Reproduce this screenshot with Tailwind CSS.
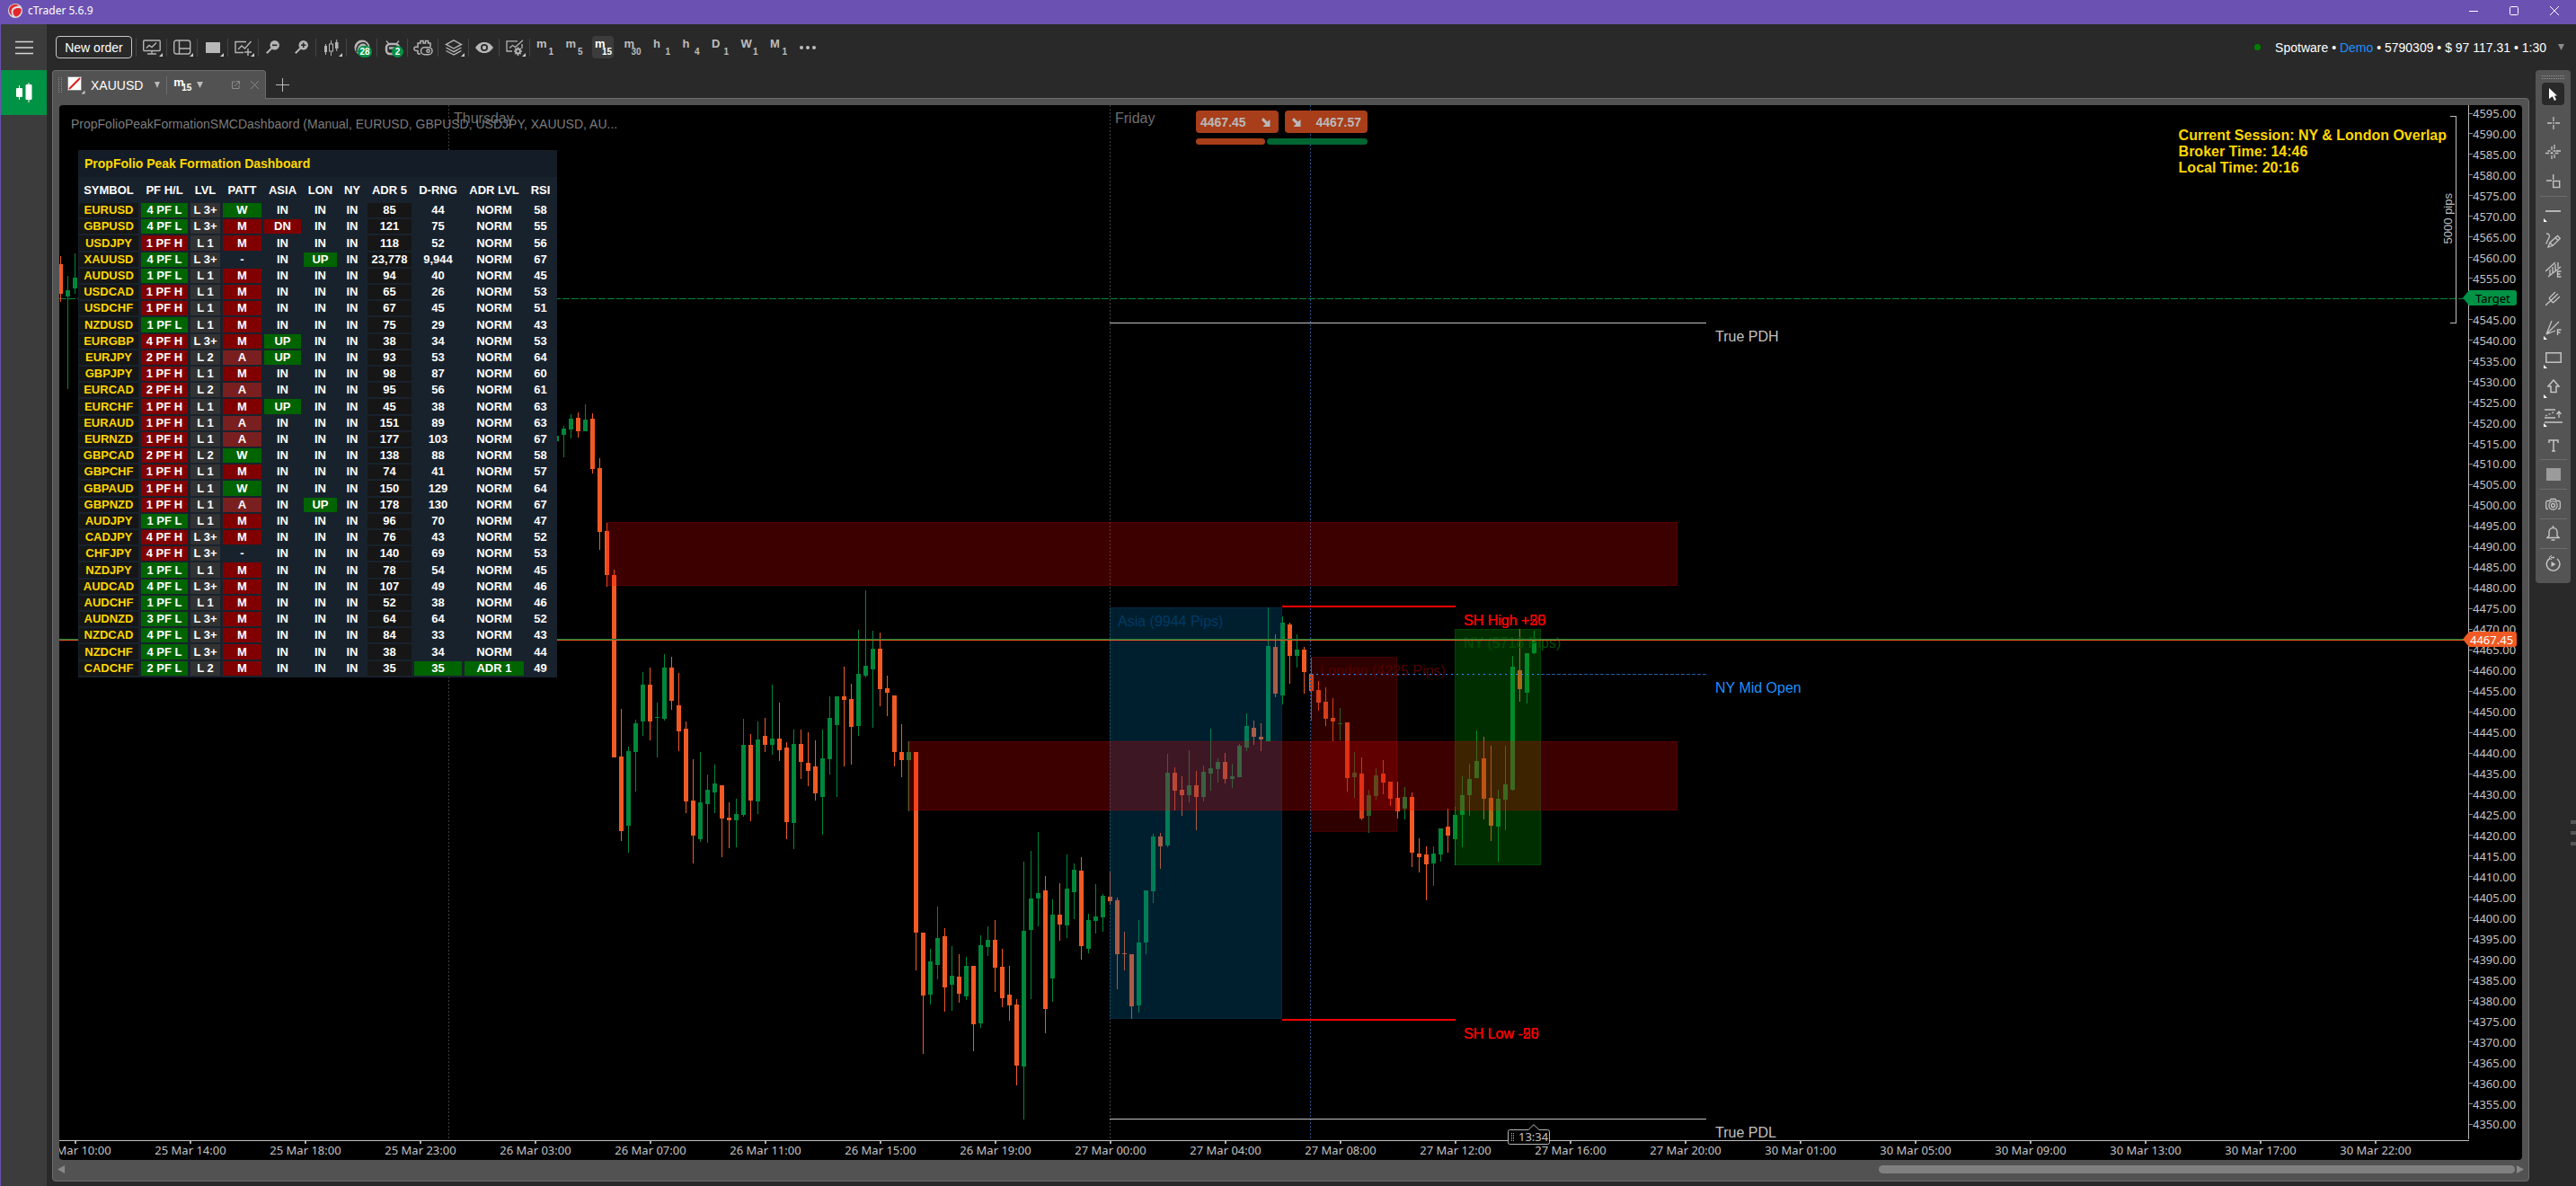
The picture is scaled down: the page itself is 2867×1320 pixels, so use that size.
<!DOCTYPE html>
<html lang="en">
<head>
  <meta charset="UTF-8" />
  <meta name="viewport" content="width=device-width, initial-scale=1.0"/>
  <title>cTrader 5.6.9</title>
  <script src="https://cdn.jsdelivr.net/npm/@tailwindcss/browser@4"></script>
</head>

<body class="flex flex-col h-screen overflow-hidden bg-[#292929] text-[#c4c4c4] text-sm font-['Liberation_Sans',Arial,sans-serif]">

<!-- Title bar -->
<header class="flex items-center h-[27px] shrink-0 bg-[#6b51b1] text-white">
  <svg class="w-4 h-4 ml-[9px] -mt-1" viewBox="0 0 16 16">
    <circle cx="8" cy="8" r="8" fill="#d9dde0"/>
    <path d="M1 7A7 7 0 0 1 12.500 2.500C9 2.500 4 4 3.500 8.500C3.300 10 4 12 5 13.500A7 7 0 0 1 1 7Z" fill="#e3262c"/>
    <path d="M5.500 9.500C5.500 6.500 8 5 11 5C13 5 14.500 5.500 14.800 6.500C15 10 12.500 14 8.500 14.500C6.500 13.500 5.500 11.500 5.500 9.500Z" fill="#e3262c"/>
  </svg>
  <h1 class="ml-1.5 -mt-1 text-xs leading-4 font-['Noto_Sans',sans-serif]">cTrader 5.6.9</h1>
  <div class="flex ml-auto mr-0.5 -mt-1 h-full items-center">
    <button class="w-[45px] flex justify-center" aria-label="Minimize"><svg class="w-3 h-3" viewBox="0 0 12 12" stroke="#fff" fill="none"><path d="M1 6.500h10"/></svg></button>
    <button class="w-[45px] flex justify-center" aria-label="Maximize"><svg class="w-3 h-3" viewBox="0 0 12 12" stroke="#fff" fill="none"><rect x="1.500" y="1.500" width="9" height="9" rx="1"/></svg></button>
    <button class="w-[45px] flex justify-center" aria-label="Close"><svg class="w-3 h-3" viewBox="0 0 12 12" stroke="#fff" fill="none"><path d="M1 1l10 10M11 1L1 11"/></svg></button>
  </div>
</header>

<div class="relative flex flex-1 min-h-0 border-l border-[#6b51b1]">
  <!-- Sidebar -->
  <nav class="w-[51px] shrink-0 bg-[#3c3c3c]">
    <button class="flex items-center justify-center w-full h-[51px]" aria-label="Menu">
      <svg class="w-5 h-4" viewBox="0 0 20 16" stroke="#d6d6d6" stroke-width="1.500"><path d="M0 1.500h20M0 8h20M0 14.500h20"/></svg>
    </button>
    <button class="flex items-center justify-center w-full h-[50px] bg-[#009245]" aria-label="Trade">
      <svg class="w-[18px] h-[22px]" viewBox="0 0 18 22" fill="#fff"><rect x="0" y="6" width="7" height="10" rx="1"/><rect x="3" y="3" width="1" height="16"/><rect x="10.500" y="2" width="7" height="17" rx="1"/><rect x="13.500" y="0" width="1" height="22"/></svg>
    </button>
  </nav>

  <main class="flex flex-col flex-1 min-w-0">
    <!-- Toolbar -->
    <div class="flex items-center h-[51px] shrink-0 pl-[10px]">
      <button class="w-[85px] h-[25px] mr-1 border border-[#c8c8c8] rounded-[4px] text-white text-sm">New order</button>
      <div class="flex items-center h-5 text-[#b4b4b4]">
        <button class="relative flex items-center justify-center w-[34px] h-5 border-l border-[#454545]" aria-label="Templates">
          <svg class="w-5 h-[17px]" viewBox="0 0 20 17" fill="none" stroke="currentColor" stroke-width="1.400"><rect x=".7" y="1" width="18.500" height="11.500" rx="1"/><path d="M10 13v3M5 16h10M4 9.500l3-3 3 2 5-5"/></svg>
          <svg class="absolute right-1 bottom-0 w-1 h-1" viewBox="0 0 4 4" fill="#ccc"><path d="M4 0v4H0z"/></svg>
        </button>
        <button class="relative flex items-center justify-center w-[34px] h-5 border-l border-[#454545]" aria-label="Layout">
          <svg class="w-5 h-[17px]" viewBox="0 0 20 17" fill="none" stroke="currentColor" stroke-width="1.400"><rect x=".7" y="1" width="18" height="15" rx="2.500"/><path d="M6.500 1v15M6.500 10H19"/></svg>
          <svg class="absolute right-1 bottom-0 w-1 h-1" viewBox="0 0 4 4" fill="#ccc"><path d="M4 0v4H0z"/></svg>
        </button>
        <button class="relative flex items-center justify-center w-[34px] h-5 border-l border-[#454545]" aria-label="Single chart">
          <svg class="w-4 h-3" viewBox="0 0 16 12" fill="#b8b8b8"><rect width="16" height="12"/></svg>
          <svg class="absolute right-1 bottom-0 w-1 h-1" viewBox="0 0 4 4" fill="#ccc"><path d="M4 0v4H0z"/></svg>
        </button>
        <button class="relative flex items-center justify-center w-[34px] h-5 border-l border-[#454545]" aria-label="New chart">
          <svg class="w-5 h-[18px]" viewBox="0 0 20 18" fill="none" stroke="currentColor" stroke-width="1.400"><path d="M13 2.500H1v12h9M4 11l4-4 3.500 3L18.500 2M15 10v8M11 14h8"/></svg>
          <svg class="absolute right-1 bottom-0 w-1 h-1" viewBox="0 0 4 4" fill="#ccc"><path d="M4 0v4H0z"/></svg>
        </button>
        <button class="flex items-center justify-center w-8 h-5 border-l border-[#454545]" aria-label="Zoom out">
          <svg class="w-[15px] h-[15px]" viewBox="0 0 15 15"><path d="M.8 14.200l6-6" stroke="#b4b4b4" stroke-width="2"/><circle cx="9.700" cy="5.300" r="5.200" fill="#b4b4b4"/><path d="M7 5.300h5.400" stroke="#292929" stroke-width="1.600"/></svg>
        </button>
        <button class="flex items-center justify-center w-8 h-5" aria-label="Zoom in">
          <svg class="w-[15px] h-[15px]" viewBox="0 0 15 15"><path d="M.8 14.200l6-6" stroke="#b4b4b4" stroke-width="2"/><circle cx="9.700" cy="5.300" r="5.200" fill="#b4b4b4"/><path d="M7 5.300h5.400M9.700 2.600v5.400" stroke="#292929" stroke-width="1.600"/></svg>
        </button>
        <button class="relative flex items-center justify-center w-[34px] h-5 border-l border-[#454545]" aria-label="Chart type">
          <svg class="w-4 h-[18px]" viewBox="0 0 16 18" fill="#b4b4b4"><rect x="0" y="7" width="3" height="7"/><rect x="1" y="5" width="1" height="12"/><rect x="5.500" y="5" width="4" height="8" fill="none" stroke="#b4b4b4"/><rect x="7" y="1" width="1" height="4"/><rect x="7" y="13" width="1" height="5"/><rect x="12" y="3" width="3.500" height="7"/><rect x="13.200" y="0" width="1" height="13"/></svg>
          <svg class="absolute right-1 bottom-0 w-1 h-1" viewBox="0 0 4 4" fill="#ccc"><path d="M4 0v4H0z"/></svg>
        </button>
        <button class="relative flex items-center justify-center w-[34px] h-5 border-l border-[#454545]" aria-label="Indicators">
          <svg class="w-[18px] h-[18px]" viewBox="0 0 18 18"><circle cx="9" cy="9" r="8.500" fill="#b4b4b4"/><path d="M3 14C2 9 5 4 10 3.500c3 0 4 2 5 4M6 15c0-5 2-7 6-7" stroke="#292929" stroke-width="1.500" fill="none"/></svg>
          <span class="absolute left-3 top-2 w-4 h-[13px] rounded-full bg-[#009245] text-white text-[10px] leading-[13px] font-bold">28</span>
        </button>
        <button class="relative flex items-center justify-center w-[34px] h-5 border-l border-[#454545]" aria-label="cBots">
          <svg class="w-[18px] h-[18px]" viewBox="0 0 18 18" fill="none" stroke="#b4b4b4"><path d="M2 1.500l3 3.500M16 1.500L13 5" stroke-width="1.200"/><rect x="2" y="5" width="14" height="11" rx="4" stroke-width="2.500"/><path d="M5 9.500h8" stroke-width="2.500"/></svg>
          <span class="absolute left-4 top-2 w-[13px] h-[13px] rounded-full bg-[#009245] text-white text-[10px] leading-[13px] font-bold">2</span>
        </button>
        <button class="flex items-center justify-center w-[34px] h-5 border-l border-[#454545]" aria-label="Plugins">
          <svg class="w-[22px] h-[18px]" viewBox="0 0 22 18" fill="none" stroke="currentColor" stroke-width="1.500"><path d="M5 16v-3.500C1 13 .8 11 1 9.500s2-1.500 4-1V4h3V1.500h3V4h2.500V1.500h3V4H19v4M5 16h3"/><rect x="8.500" y="8.700" width="12.500" height="8" rx="4"/><circle cx="16.500" cy="12.700" r="1.600"/></svg>
        </button>
        <button class="relative flex items-center justify-center w-[34px] h-5 border-l border-[#454545]" aria-label="Layers">
          <svg class="w-5 h-[18px]" viewBox="0 0 20 18" fill="none" stroke="currentColor" stroke-width="1.400"><path d="M10 .8l8.500 4.600L10 10 1.500 5.400zM1.500 9l8.500 4.600L18.500 9M1.500 12.500L10 17l8.500-4.500"/></svg>
          <svg class="absolute right-1 bottom-0 w-1 h-1" viewBox="0 0 4 4" fill="#ccc"><path d="M4 0v4H0z"/></svg>
        </button>
        <button class="flex items-center justify-center w-[34px] h-5 border-l border-[#454545]" aria-label="Visibility">
          <svg class="w-5 h-3" viewBox="0 0 20 12"><path d="M0 6C3 1.500 6.500 0 10 0s7 1.500 10 6c-3 4.500-6.500 6-10 6S3 10.500 0 6z" fill="#b8b8b8"/><circle cx="10" cy="6" r="4" fill="#292929"/><circle cx="10" cy="6" r="2.200" fill="#b8b8b8"/></svg>
        </button>
        <button class="relative flex items-center justify-center w-[34px] h-5 border-l border-[#454545]" aria-label="Chart settings">
          <svg class="w-5 h-[18px]" viewBox="0 0 20 18" fill="none" stroke="currentColor" stroke-width="1.300"><path d="M13 1.800H1V13h6M18 5v5M4 9.500l3.500-3 3 2L19 .8"/><circle cx="13.500" cy="13" r="2.400" stroke-width="2"/><path d="M13.500 8.500v1.500M13.500 16v2M9 13h1.500M16.500 13H18M10.300 9.800l1 1M15.700 15.200l1 1M10.300 16.200l1-1M15.700 10.800l1-1" stroke-width="1.600"/></svg>
          <svg class="absolute right-1 bottom-0 w-1 h-1" viewBox="0 0 4 4" fill="#ccc"><path d="M4 0v4H0z"/></svg>
        </button>
        <span class="w-px h-5 bg-[#454545]"></span>
      </div>

      <div id="timeframes" class="flex justify-between w-[284px] ml-1"></div>
      <button class="flex gap-[3px] ml-3" aria-label="More">
        <i class="w-1 h-1 rounded-full bg-[#bdbdbd]"></i><i class="w-1 h-1 rounded-full bg-[#bdbdbd]"></i><i class="w-1 h-1 rounded-full bg-[#bdbdbd]"></i>
      </button>

      <div class="flex items-center ml-auto pr-[13px]">
        <i class="w-[7px] h-[7px] mr-4 rounded-full bg-[#008000]"></i>
        <p class="text-sm text-white">Spotware • <a href="#" class="text-[#1e90ff]">Demo</a> • 5790309 • $ 97 117.31 • 1:30</p>
        <svg class="w-[7px] h-[7px] ml-[13px]" viewBox="0 0 7 7" fill="#8a8a8a"><path d="M0 0h7L3.500 7z"/></svg>
      </div>
    </div>

    <div class="flex flex-1 min-h-0 pl-1.5 pr-1.5 pb-[5px]">
      <div class="flex flex-col flex-1 min-w-0">
        <!-- Tabs -->
        <div class="relative z-10 flex h-8 -mb-px shrink-0">
          <div class="flex items-center w-[238px] pl-1.5 bg-[#525252] border-t border-l border-r border-[#6c6c6c] rounded-t-[4px]">
            <svg class="w-1 h-[18px]" viewBox="0 0 4 18" stroke="#8a8a8a" stroke-dasharray="1 1"><path d="M.5 0v18M3.500 0v18"/></svg>
            <svg class="w-5 h-5 ml-1.5" viewBox="0 0 20 20"><rect x="0.500" y="0.500" width="15" height="15" fill="#fff" stroke="#888"/><path d="M2 14L14 2" stroke="#e3171b" stroke-width="2"/><path d="M19.500 15.500v4h-4z" fill="#ccc"/></svg>
            <button class="ml-1.5 text-sm text-white">XAUUSD</button>
            <svg class="w-1.5 h-[7px] ml-[13px]" viewBox="0 0 6 7" fill="#bbb"><path d="M0 0h6L3 7z"/></svg>
            <span class="w-px h-5 mx-[7px] bg-[#6c6c6c]"></span>
            <button class="relative w-5 h-5 text-white font-bold" aria-label="Timeframe"><span class="absolute left-0 top-0 text-[13px] leading-[13px]">m</span><sub class="absolute right-0 bottom-0.5 text-[10px] leading-[10px]">15</sub></button>
            <svg class="w-[7px] h-[7px] ml-1.5" viewBox="0 0 7 7" fill="#bbb"><path d="M0 0h7L3.500 7z"/></svg>
            <button class="ml-8" aria-label="Detach"><svg class="w-[9px] h-[9px]" viewBox="0 0 9 9" fill="none" stroke="#8c8c8c"><path d="M4 1H.5v7.500H8V5M5 .5h3.500V4M8.500.5L3 6"/></svg></button>
            <button class="ml-3" aria-label="Close tab"><svg class="w-[9px] h-[9px]" viewBox="0 0 9 9" stroke="#8c8c8c"><path d="M0 0l9 9M9 0L0 9"/></svg></button>
          </div>
          <button class="ml-[11px] self-center" aria-label="New tab"><svg class="w-[15px] h-[15px]" viewBox="0 0 15 15" stroke="#bbb"><path d="M7.500 0v15M0 7.500h15"/></svg></button>
        </div>

        <!-- Chart frame -->
        <section class="flex flex-col flex-1 min-h-0 px-[7px] pt-[7px] bg-[#525252] border border-[#6c6c6c] rounded-b-[4px] rounded-tr-[4px]">
          <div class="grid flex-1 min-h-0 grid-cols-[1fr_60px] grid-rows-[1fr_23px] bg-black rounded-[4px] overflow-hidden">
            <div class="relative overflow-hidden">
              <svg id="chart" class="absolute inset-0 w-full h-full" shape-rendering="crispEdges" font-size="16">
                <g transform="translate(-66 -117)">
                  <g stroke="#404040" stroke-dasharray="2 2">
                    <path d="M499.500 117V1268M1235.500 117V1268"/>
                  </g>
                  <path d="M66 332.500H2748" stroke="#00873c" stroke-dasharray="8 2"/>
                  <g fill="#6e6e6e">
                    <text x="505" y="137">Thursday</text>
                    <text x="1241" y="137">Friday</text>
                  </g>
                  <g id="candles"></g>
                  <path d="M1458.500 117V1268" stroke="#255390" stroke-dasharray="2 2"/>
                  <!-- sessions -->
                  <rect x="1235" y="676" width="192" height="458" fill="#006799" fill-opacity=".3"/>
                  <rect x="1235.500" y="676.500" width="191" height="457" fill="none" stroke="#006799" stroke-opacity=".15"/>
                  <rect x="1459" y="731" width="96" height="195" fill="#990000" fill-opacity=".3"/>
                  <rect x="1459.500" y="731.500" width="95" height="194" fill="none" stroke="#990000" stroke-opacity=".2"/>
                  <rect x="1619" y="700" width="96" height="263" fill="#009900" fill-opacity=".3"/>
                  <rect x="1619.500" y="700.500" width="95" height="262" fill="none" stroke="#009900" stroke-opacity=".2"/>
                  <!-- supply zones -->
                  <g fill="#ff0000" fill-opacity=".24">
                    <rect x="675" y="581" width="1192" height="71"/>
                    <rect x="1010" y="825" width="857" height="77"/>
                  </g>
                  <g fill="none" stroke="#ff0000" stroke-opacity=".13">
                    <rect x="675.500" y="581.500" width="1191" height="70"/>
                    <rect x="1010.500" y="825.500" width="856" height="76"/>
                  </g>
                  <text x="1244" y="697" fill="#003a66">Asia (9944 Pips)</text>
                  <text x="1469" y="752" fill="#540000">London (4225 Pips)</text>
                  <text x="1629" y="721" fill="#005200">NY (5718 Pips)</text>
                  <path d="M1459 750.500H1715" stroke="#1e90ff" stroke-dasharray="2 4"/>
                  <path d="M1715 750.500H1900" stroke="#1e5ca8" stroke-dasharray="4 2"/>
                  <path d="M1235 359.500H1899M1235 1245.500H1899" stroke="#c0c0c0"/>
                  <path d="M1427 675H1620M1427 1135H1620" stroke="#ff0000" stroke-width="2"/>
                  <path d="M66 711.500H2748" stroke="#00873c"/>
                  <path d="M66 712.500H2748" stroke="#f15a24"/>
                  <g fill="#ff0000">
                    <text x="1629" y="696">SH High +25</text><text x="1629" y="696">SH High +50</text>
                    <text x="1629" y="1156">SH Low -25</text><text x="1629" y="1156">SH Low -50</text>
                  </g>
                  <text x="1909" y="771" fill="#1e90ff">NY Mid Open</text>
                  <g fill="#c0c0c0">
                    <text x="1909" y="380">True PDH</text>
                    <text x="1909" y="1266">True PDL</text>
                  </g>
                </g>
              </svg>

              <p class="absolute left-[13px] top-[13px] text-sm leading-4 text-[#7c7c7c] whitespace-nowrap">PropFolioPeakFormationSMCDashbaord (Manual, EURUSD, GBPUSD, USDJPY, XAUUSD, AU...</p>

              <!-- Dashboard -->
              <div class="absolute left-[21px] top-[50px] w-[533px] bg-[#18222d] text-[13px] font-bold text-white">
                <h2 class="h-[30px] pl-[7px] leading-[30px] text-sm bg-[#141d27] text-[#ffd700]">PropFolio Peak Formation Dashboard</h2>
                <table class="table-fixed w-[532px] h-[557px] ml-px border-separate border-spacing-0 text-center leading-4">
                  <colgroup>
                    <col class="w-[69px]"><col class="w-[55px]"><col class="w-[36px]"><col class="w-[46px]"><col class="w-[44px]"><col class="w-[40px]"><col class="w-[31px]"><col class="w-[52px]"><col class="w-[56px]"><col class="w-[69px]"><col class="w-[34px]">
                  </colgroup>
                  <thead>
                    <tr class="h-[29px] whitespace-nowrap">
                      <th class="p-0 pr-[3px]">SYMBOL</th><th class="p-0 pr-[3px]">PF H/L</th><th class="p-0 pr-[3px]">LVL</th><th class="p-0 pr-[3px]">PATT</th><th class="p-0 pr-[3px]">ASIA</th><th class="p-0 pr-[3px]">LON</th><th class="p-0 pr-[3px]">NY</th><th class="p-0 pr-[3px]">ADR 5</th><th class="p-0 pr-[3px]">D-RNG</th><th class="p-0 pr-[3px]">ADR LVL</th><th class="p-0 pr-[3px]">RSI</th>
                    </tr>
                  </thead>
                  <tbody id="pairs"></tbody>
                </table>
              </div>

              <!-- Quick trade -->
              <div class="absolute left-[1265px] top-1.5 w-[191px] text-sm font-bold text-[#b9b9b9]">
                <div class="flex justify-between">
                  <button class="flex items-center justify-between w-[92px] h-[25px] pl-[5px] pr-[9px] rounded-[4px] bg-[#a83e1a]">4467.45
                    <svg class="w-2.5 h-2.5" viewBox="0 0 10 10" fill="#b9b9b9"><path d="M2 0l4.500 4.500L9.500 2v8h-8l3-3L0 2.500z"/></svg>
                  </button>
                  <button class="flex items-center justify-between w-[92px] h-[25px] pl-2 pr-[7px] rounded-[4px] bg-[#a83e1a]">
                    <svg class="w-2.5 h-2.5" viewBox="0 0 10 10" fill="#b9b9b9"><path d="M2 0l4.500 4.500L9.500 2v8h-8l3-3L0 2.500z"/></svg>4467.57
                  </button>
                </div>
                <div class="flex gap-0.5 mt-1.5">
                  <i class="w-[77px] h-[7px] rounded-full bg-[#a83e1a]"></i>
                  <i class="flex-1 h-[7px] rounded-full bg-[#006631]"></i>
                </div>
              </div>

              <p class="absolute right-6 top-[25px] text-base leading-[18px] font-bold text-[#ffd700]">Current Session: NY &amp; London Overlap<br>Broker Time: 14:46<br>Local Time: 20:16</p>

              <div class="absolute right-[13px] top-3 w-[7px] h-[231px] border-r border-y border-[#bdbdbd]"></div>
              <span class="absolute right-3.5 top-[98px] rotate-180 [writing-mode:vertical-rl] text-[13px] leading-4 text-[#bdbdbd]">5000 pips</span>
            </div>

            <!-- Price axis -->
            <div class="relative border-l border-[#b8b8b8] text-[13px] font-['Noto_Sans',sans-serif]">
              <ol id="prices" class="flex flex-col justify-between h-full pt-px pb-2"></ol>
              <div class="absolute -left-[7px] top-[206px] flex items-center w-[60px] h-[17px]">
                <svg class="absolute inset-0 w-full h-full" viewBox="0 0 60 17" fill="#009245"><path d="M0 8.500L7 0H57a3 3 0 0 1 3 3V14a3 3 0 0 1-3 3H7z"/></svg>
                <span class="relative pl-3.5 leading-4 text-black">Target</span>
              </div>
              <div class="absolute -left-[7px] top-[586px] flex items-center w-[60px] h-[17px]">
                <svg class="absolute inset-0 w-full h-full" viewBox="0 0 60 17" fill="#f15a24"><path d="M0 8.500L7 0H57a3 3 0 0 1 3 3V14a3 3 0 0 1-3 3H7z"/></svg>
                <span class="relative pl-2 leading-4 text-white">4467.45</span>
              </div>
            </div>

            <!-- Time axis -->
            <div class="relative col-span-2">
              <div class="mr-[59px] h-0.5 border-b border-[#c0c0c0]"></div>
              <ol id="times" class="flex -ml-[46px] overflow-hidden text-[13px] font-['Noto_Sans',sans-serif]"></ol>
              <div class="absolute left-[1612px] -top-[17px] w-[47px] h-[23px]">
                <svg class="absolute inset-0" viewBox="0 0 47 23" fill="#000" stroke="#b8b8b8"><path d="M2.500 6.500H23L29 .7l6 5.800H44.500a2 2 0 0 1 2 2V20.500a2 2 0 0 1-2 2H2.500a2 2 0 0 1-2-2V8.500a2 2 0 0 1 2-2z"/><path d="M4.500 10v9M6.500 10v9" stroke-dasharray="1 1"/></svg>
                <span class="absolute left-3 top-1.5 text-[13px] leading-4 font-['Noto_Sans',sans-serif]">13:34</span>
              </div>
            </div>
          </div>

          <!-- Scrollbar -->
          <div class="flex items-center justify-between h-[23px] shrink-0 -mx-0.5 pb-0.5">
            <svg class="w-2 h-[9px]" viewBox="0 0 8 9" fill="#888"><path d="M8 0v9L0 4.500z"/></svg>
            <i class="ml-auto mr-0.5 w-[708px] h-[9px] rounded-full bg-[#808080]"></i>
            <svg class="w-2 h-[9px]" viewBox="0 0 8 9" fill="#888"><path d="M0 0v9l8-4.500z"/></svg>
          </div>
        </section>
      </div>

      <!-- Drawing tools -->
      <aside class="flex flex-col items-center self-start w-[39px] ml-[7px] pt-1.5 pb-2.5 bg-[#545454] rounded-[4px] text-[#c4c4c4]">
        <svg class="w-[26px] h-1 mb-1" viewBox="0 0 26 4" stroke="#999" stroke-dasharray="1 1"><path d="M0 .5h26M0 3.500h26"/></svg>
        <div class="flex flex-col justify-between h-[123px]">
          <button class="flex items-center justify-center w-[25px] h-[25px] rounded-[4px] bg-[#292929]" aria-label="Pointer"><svg class="w-[9px] h-3.5" viewBox="0 0 9 14" fill="#fff"><path d="M0 0l9 8.500H5.800L8 13l-2 1-2.200-4.700L0 12z"/></svg></button>
          <button class="flex items-center justify-center w-[25px] h-[25px]" aria-label="Crosshair"><svg class="w-4 h-4" viewBox="0 0 16 16" stroke="currentColor" stroke-width="1.300"><path d="M8 1v5M8 10v5M1 8h5M10 8h5M8 7v2"/></svg></button>
          <button class="flex items-center justify-center w-[25px] h-[25px]" aria-label="Synced crosshair"><svg class="w-[17px] h-[17px]" viewBox="0 0 17 17" stroke="currentColor" stroke-width="1.300"><path d="M7 2v4M7 8v2M7 12v4M0 9.500h4M5.500 9.500h3M10.500 9.500h4M10 0v5M10 11v4M2.500 7h3M12 7h5M8.500 7h3"/></svg></button>
          <button class="flex items-center justify-center w-[25px] h-[25px]" aria-label="Measure"><svg class="w-4 h-4" viewBox="0 0 16 16" fill="none" stroke="currentColor" stroke-width="1.400"><path d="M7.700 0v6M0 7h6"/><rect x="7.700" y="7.500" width="7" height="7"/></svg></button>
        </div>
        <i class="w-[30px] h-px my-[3px] bg-[#6c6c6c]"></i>
        <div class="flex flex-col justify-between h-[286px]">
          <button class="relative flex items-center justify-center w-[25px] h-[25px]" aria-label="Line"><svg class="w-[17px] h-2" viewBox="0 0 17 8" stroke="#d4d4d4" stroke-width="1.500"><path d="M0 4h17"/></svg><svg class="absolute left-0.5 bottom-0 w-1 h-1" viewBox="0 0 4 4" fill="#fff"><path d="M0 0v4h4z"/></svg></button>
          <button class="flex items-center justify-center w-[25px] h-[25px]" aria-label="Pencil"><svg class="w-[17px] h-[17px]" viewBox="0 0 17 17" fill="none" stroke="currentColor" stroke-width="1.300"><path d="M1 1c4 0 4 3 2.500 5.500S2 10 .7 12.500M3 16l2-5 8.500-7.500 2.800 3L8 14.500zM11 5.500l3 3M5 11l3 3.500"/></svg></button>
          <button class="flex items-center justify-center w-[25px] h-[25px]" aria-label="Equidistant channel"><svg class="w-[18px] h-[18px]" viewBox="0 0 18 18" fill="none" stroke="currentColor" stroke-width="1.300"><path d="M0 11L11 1M3 17L17 6M5 9v6M8 6v7M11 3v7M14 1v6M17.500 11h-4v6h4M13.500 14h3"/></svg></button>
          <button class="flex items-center justify-center w-[25px] h-[25px]" aria-label="Pitchfork"><svg class="w-[17px] h-[17px]" viewBox="0 0 17 17" fill="none" stroke="currentColor" stroke-width="1.300"><path d="M0 16L14 3M4 8l4.500 5M4 8l7-7M8.500 13L16 6"/></svg></button>
          <button class="relative flex items-center justify-center w-[25px] h-[25px]" aria-label="Fibonacci"><svg class="w-[18px] h-[17px]" viewBox="0 0 18 17" fill="none" stroke="currentColor" stroke-width="1.300"><path d="M1 15L7 0M1 15L15 1M1 15l10-4M13.500 16v-6h4M13.500 13h3"/></svg><svg class="absolute left-0.5 bottom-0 w-1 h-1" viewBox="0 0 4 4" fill="#fff"><path d="M0 0v4h4z"/></svg></button>
          <button class="relative flex items-center justify-center w-[25px] h-[25px]" aria-label="Rectangle"><svg class="w-[18px] h-3" viewBox="0 0 18 12" fill="none" stroke="currentColor" stroke-width="1.500"><rect x=".8" y=".8" width="16.400" height="10.400"/></svg><svg class="absolute left-0.5 bottom-0 w-1 h-1" viewBox="0 0 4 4" fill="#fff"><path d="M0 0v4h4z"/></svg></button>
          <button class="relative flex items-center justify-center w-[25px] h-[25px]" aria-label="Arrow"><svg class="w-3.5 h-4" viewBox="0 0 14 16" fill="none" stroke="currentColor" stroke-width="1.500"><path d="M7 1l6 7h-3v6.500H4V8H1z"/></svg><svg class="absolute left-0.5 bottom-0 w-1 h-1" viewBox="0 0 4 4" fill="#fff"><path d="M0 0v4h4z"/></svg></button>
          <button class="relative flex items-center justify-center w-[25px] h-[25px]" aria-label="Risk reward"><svg class="w-5 h-4" viewBox="0 0 20 16" fill="none" stroke="currentColor" stroke-width="1.300"><path d="M0 1h12M0 10h12M0 15h20M16 10V4M13.500 6L16 3l2.500 3"/><path d="M1 8l11-5" stroke-dasharray="2 2"/></svg><svg class="absolute left-0.5 bottom-0 w-1 h-1" viewBox="0 0 4 4" fill="#fff"><path d="M0 0v4h4z"/></svg></button>
          <button class="flex items-center justify-center w-[25px] h-[25px]" aria-label="Text"><svg class="w-3 h-3.5" viewBox="0 0 12 14" fill="none" stroke="currentColor" stroke-width="1.500"><path d="M1 4V1h10v3M6 1v12M4 13h4"/></svg></button>
        </div>
        <i class="w-[30px] h-px my-[3px] bg-[#6c6c6c]"></i>
        <button class="flex items-center justify-center w-[25px] h-[25px]" aria-label="Color"><span class="w-4 h-3.5 bg-[#9b9b9b]"></span></button>
        <i class="w-[30px] h-px mt-1 mb-[3px] bg-[#6c6c6c]"></i>
        <button class="flex items-center justify-center w-[25px] h-[25px]" aria-label="Snapshot"><svg class="w-[17px] h-[14px]" viewBox="0 0 17 14" fill="none" stroke="currentColor" stroke-width="1.300"><path d="M3 12.500H2A1.500 1.500 0 0 1 .7 11V5A1.500 1.500 0 0 1 2 3.500h3l1-2h5l1 2h3A1.500 1.500 0 0 1 16.300 5v6a1.500 1.500 0 0 1-1.300 1.500h-1"/><circle cx="8.500" cy="8.500" r="4.600"/><circle cx="8.500" cy="8.500" r="2"/></svg></button>
        <i class="w-[30px] h-px mt-1 mb-[3px] bg-[#6c6c6c]"></i>
        <button class="flex items-center justify-center w-[25px] h-[25px]" aria-label="Alerts"><svg class="w-[15px] h-[17px]" viewBox="0 0 15 17" fill="none" stroke="currentColor" stroke-width="1.400"><path d="M7.500 0v2M3 11.500V7a4.500 4.500 0 0 1 9 0v4.500l2.300 2H.7zM5.500 16h4"/></svg></button>
        <i class="w-[30px] h-px mt-1 mb-[3px] bg-[#6c6c6c]"></i>
        <button class="flex items-center justify-center w-[25px] h-[25px]" aria-label="Replay"><svg class="w-[17px] h-[18px]" viewBox="0 0 17 18" fill="none" stroke="currentColor" stroke-width="1.500"><path d="M5 3.500A7.300 7.300 0 1 0 13 4M6 2.500h4"/><path d="M6.500 7l5 3-5 3z" fill="#c4c4c4" stroke="none"/><path d="M7 0L4 2.500 7 5" stroke-width="1"/></svg></button>
      </aside>
    </div>
  </main>

  <!-- Panel handle -->
  <div class="absolute right-0 top-[886px] flex flex-col gap-2">
    <i class="w-1.5 h-1 bg-[#555]"></i><i class="w-1.5 h-1 bg-[#555]"></i><i class="w-1.5 h-1 bg-[#555]"></i>
  </div>
</div>

<script>
  // timeframe buttons
  document.getElementById('timeframes').innerHTML = 'm1 m5 m15 m30 h1 h4 D1 W1 M1'.split(' ').map(t => {
    const active = t === 'm15';
    return `<button class="relative w-6 h-[25px] rounded-[4px] ${active ? 'bg-[#3c3c3c] text-white' : 'text-[#bdbdbd]'}">` +
      `<span class="absolute left-[3px] top-0.5 text-[13px] leading-[13px] font-bold">${t[0]}</span>` +
      `<sub class="absolute right-0.5 bottom-0.5 text-[10px] leading-[10px] font-bold">${t.slice(1)}</sub></button>`;
  }).join('');

  // price axis, 4550 is covered by the target marker
  let prices = '';
  for (let p = 4595; p >= 4350; p -= 5) {
    prices += `<li class="flex items-center leading-4 ${p === 4550 ? 'invisible' : ''}"><i class="w-1 h-px bg-[#888]"></i>${p}.00</li>`;
  }
  document.getElementById('prices').innerHTML = prices;

  // time axis
  document.getElementById('times').innerHTML = [
    '25 Mar 10:00', '25 Mar 14:00', '25 Mar 18:00', '25 Mar 23:00', '26 Mar 03:00', '26 Mar 07:00', '26 Mar 11:00',
    '26 Mar 15:00', '26 Mar 19:00', '27 Mar 00:00', '27 Mar 04:00', '27 Mar 08:00', '27 Mar 12:00', '27 Mar 16:00',
    '27 Mar 20:00', '30 Mar 01:00', '30 Mar 05:00', '30 Mar 09:00', '30 Mar 13:00', '30 Mar 17:00', '30 Mar 22:00'
  ].map(t => `<li class="flex flex-col items-center w-32 shrink-0 leading-4"><i class="w-0.5 h-[3px] -mb-px bg-[#a8a8a8]"></i>${t}</li>`).join('');

  // symbol, peak, level, pattern, asia, london, adr, range, rsi
  const rows = `EURUSD,4 PF L,L 3+,W,IN,IN,85,44,58
GBPUSD,4 PF L,L 3+,M,DN,IN,121,75,55
USDJPY,1 PF H,L 1,M,IN,IN,118,52,56
XAUUSD,4 PF L,L 3+,-,IN,UP,23778,9944,67
AUDUSD,1 PF L,L 1,M,IN,IN,94,40,45
USDCAD,1 PF H,L 1,M,IN,IN,65,26,53
USDCHF,1 PF H,L 1,M,IN,IN,67,45,51
NZDUSD,1 PF L,L 1,M,IN,IN,75,29,43
EURGBP,4 PF H,L 3+,M,UP,IN,38,34,53
EURJPY,2 PF H,L 2,A,UP,IN,93,53,64
GBPJPY,1 PF H,L 1,M,IN,IN,98,87,60
EURCAD,2 PF H,L 2,A,IN,IN,95,56,61
EURCHF,1 PF H,L 1,M,UP,IN,45,38,63
EURAUD,1 PF H,L 1,A,IN,IN,151,89,63
EURNZD,1 PF H,L 1,A,IN,IN,177,103,67
GBPCAD,2 PF H,L 2,W,IN,IN,138,88,58
GBPCHF,1 PF H,L 1,M,IN,IN,74,41,57
GBPAUD,1 PF H,L 1,W,IN,IN,150,129,64
GBPNZD,1 PF H,L 1,A,IN,UP,178,130,67
AUDJPY,1 PF L,L 1,M,IN,IN,96,70,47
CADJPY,4 PF H,L 3+,M,IN,IN,76,43,52
CHFJPY,4 PF H,L 3+,-,IN,IN,140,69,53
NZDJPY,1 PF L,L 1,M,IN,IN,78,54,45
AUDCAD,4 PF L,L 3+,M,IN,IN,107,49,46
AUDCHF,1 PF L,L 1,M,IN,IN,52,38,46
AUDNZD,3 PF L,L 3+,M,IN,IN,64,64,52
NZDCAD,4 PF L,L 3+,M,IN,IN,84,33,43
NZDCHF,4 PF L,L 3+,M,IN,IN,38,34,44
CADCHF,2 PF L,L 2,M,IN,IN,35,35,49`.split('\n').map(r => r.split(','));

  const GREEN = 'bg-[#006400]', RED = 'bg-[#800000]', DARK = 'bg-[#161616]';
  const fill = { W: GREEN, M: RED, A: 'bg-[#7a1f1f]', UP: GREEN, DN: RED };
  const td = (text, cls) => `<td class="p-0 border-r-3 border-b-2 border-transparent bg-clip-padding ${cls || ''}">${text}</td>`;
  const num = n => Number(n).toLocaleString('en-US');

  document.getElementById('pairs').innerHTML = rows.map(([sym, pf, lvl, patt, asia, lon, adr, rng, rsi]) => {
    const hit = adr === rng && sym === 'CADCHF';
    return '<tr class="whitespace-nowrap">' +
      td(sym, DARK + ' text-[#ffd700]') +
      td(pf, pf.endsWith('L') ? GREEN : RED) +
      td(lvl, 'bg-[#323232]') +
      td(patt, fill[patt]) + td(asia, fill[asia]) + td(lon, fill[lon]) + td('IN') +
      td(num(adr), DARK) + td(num(rng), hit ? GREEN : '') +
      td(hit ? 'ADR 1' : 'NORM', hit ? GREEN : '') + td(rsi) + '</tr>';
  }).join('');

  // slot, direction, high, body top, body bottom, low
  const candles = `-69 r 285 294 327 336|-68 g 307 323 330 433|-67 g 282 309 321 327|0 g 485 485 491 491|1 g 474 477 484 509
2 g 461 466 478 488|3 r 459 465 480 487|4 g 450 467 480 480|5 r 460 466 522 527|6 r 510 521 592 612|7 r 582 591 640 653
8 r 634 640 843 843|9 r 789 842 925 936|10 g 831 836 919 949|11 g 801 805 837 881|12 g 748 762 803 819|13 r 743 762 803 824
14 g 782 798 799 843|15 g 728 743 800 802|16 r 731 743 780 790|17 r 749 785 814 836|18 r 803 811 892 905|19 r 845 891 930 961
20 g 837 893 934 937|21 g 862 879 895 938|22 g 851 872 882 905|23 r 874 874 911 954|24 r 893 910 913 944|25 g 889 906 913 943
26 g 800 829 907 909|27 r 817 829 891 914|28 g 803 823 892 906|29 r 799 819 829 837|30 g 762 822 829 840|31 r 782 822 835 847
32 r 826 832 915 934|33 g 812 828 916 945|34 r 812 828 848 867|35 r 815 849 858 875|36 r 824 853 883 891|37 g 812 844 887 929
38 g 775 799 845 862|39 g 775 775 807 887|40 r 742 775 779 853|41 r 761 778 809 851|42 g 701 750 808 819|43 g 657 741 752 754
44 g 702 722 745 810|45 r 704 722 767 786|46 r 752 766 771 797|47 r 774 774 837 853|48 r 806 837 846 865|49 g 825 837 846 903
50 r 837 837 1038 1080|51 r 1038 1038 1108 1173|52 g 1056 1070 1107 1118|53 g 1009 1044 1074 1090|54 r 1033 1042 1099 1126
55 g 1053 1086 1096 1125|56 r 1062 1087 1106 1116|57 g 1065 1075 1109 1113|58 r 1075 1075 1140 1170|59 g 1041 1052 1139 1144
60 g 1031 1046 1054 1064|61 r 1024 1046 1077 1104|62 r 1056 1076 1111 1121|63 r 1075 1107 1119 1136|64 r 1112 1118 1186 1208
65 g 959 1036 1187 1246|66 g 947 1000 1035 1112|67 g 926 994 1000 1031|68 r 975 991 1123 1150|69 g 1001 1018 1089 1115
70 r 983 1018 1029 1047|71 g 951 989 1030 1044|72 g 961 968 993 1023|73 r 954 969 1053 1068|74 g 1017 1024 1056 1061
75 g 984 1020 1025 1039|76 g 995 997 1021 1037|77 r 970 998 1003 1007|78 r 999 1002 1062 1101|79 r 1037 1061 1062 1080
80 r 1062 1062 1120 1134|81 g 1024 1049 1119 1127|82 g 991 991 1049 1062|83 g 928 931 992 1005|84 r 927 931 942 967
85 g 839 860 941 943|86 r 854 860 880 902|87 r 864 879 885 908|88 g 835 874 885 893|89 r 858 874 887 924|90 g 852 859 887 892
91 g 811 855 861 880|92 g 844 848 856 871|93 r 838 848 867 872|94 g 850 864 867 877|95 g 828 830 865 865|96 g 794 808 832 836
97 r 802 810 820 829|98 r 805 820 823 836|99 g 676 719 825 825|100 r 706 720 772 776|101 g 686 693 774 784|102 r 693 695 730 761
103 g 706 723 730 743|104 r 720 723 748 772|105 r 732 750 769 802|106 r 758 768 782 791|107 r 765 781 800 808
108 r 777 799 803 825|109 g 788 805 806 824|110 r 804 804 866 881|111 g 837 860 865 888|112 r 843 861 911 913
113 g 879 885 908 927|114 g 855 863 886 890|115 r 846 861 871 884|116 r 870 870 889 897|117 r 870 888 903 911
118 g 876 887 900 912|119 r 882 887 949 965|120 r 933 950 954 971|121 r 942 951 962 1002|122 g 942 950 961 986
123 g 922 922 951 959|124 r 900 920 930 949|125 g 898 907 934 963|126 g 864 885 907 943|127 g 850 867 885 908
128 g 813 847 866 866|129 r 820 844 889 912|130 r 830 888 919 936|131 g 879 889 920 959|132 g 830 873 890 924
133 g 730 742 879 880|134 r 700 746 767 781|135 g 727 727 771 783|136 g 702 712 727 728`;

  document.getElementById('candles').innerHTML = candles.split(/[|\n]/).map(line => {
    const [slot, dir, high, top, bottom, low] = line.trim().split(' ').map((v, i) => i === 1 ? v : +v);
    const x = 619 + slot * 8;
    return `<g fill="${dir === 'g' ? '#00873c' : '#f15a24'}"><rect x="${x}" y="${high}" width="1" height="${low - high}"/>` +
      `<rect x="${x - 2}" y="${top}" width="5" height="${bottom - top}"/></g>`;
  }).join('');
</script>
</body>
</html>
